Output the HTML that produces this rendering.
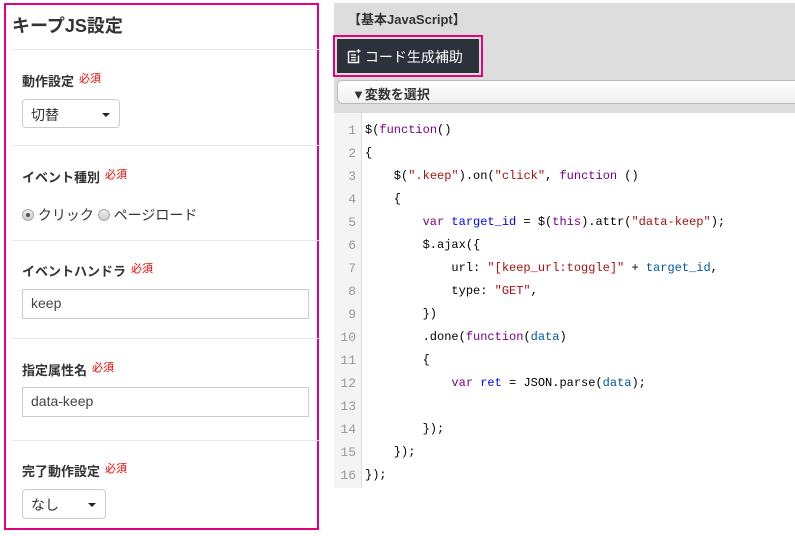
<!DOCTYPE html>
<html><head><meta charset="utf-8"><style>
*{box-sizing:border-box;margin:0;padding:0}
body{width:795px;height:534px;background:#fff;font-family:"Liberation Sans","Noto Sans CJK JP",sans-serif;color:#333;position:relative;overflow:hidden}
.lp{position:absolute;left:4px;top:3px;width:315px;height:527px;border:2px solid #e4007f}
.a{position:absolute}
.title{left:12px;top:12px;font-size:18px;font-weight:bold;color:#333}
.hr{position:absolute;left:8px;width:307px;height:1px;background:#e8e8e8}
.lbl{font-size:13px;font-weight:bold;color:#333}
.req{color:#e00;font-size:11px;font-weight:normal;margin-left:5px;vertical-align:4px}
.sel{border:1px solid #ccc;border-radius:4px;font-size:14px;padding:5px 8px;background:#fff}
.sel:after{content:"";position:absolute;right:9px;top:13px;border-left:4px solid transparent;border-right:4px solid transparent;border-top:4px solid #222}
.inp{border:1px solid #ccc;font-size:14px;padding:5px 8px;background:#fff;color:#444}
.rad{display:inline-block;width:12px;height:12px;border-radius:50%;border:1px solid #aaa;background:linear-gradient(#eee,#ccc);vertical-align:-1px;position:relative}
.rad.on:after{content:"";position:absolute;left:3px;top:3px;width:4px;height:4px;border-radius:50%;background:#555}
.rp{position:absolute;left:334px;top:3px;width:461px;height:110px;background:#ddd}
.code{position:absolute;left:334px;top:113px;width:461px;height:375px;background:#fff}
.gut{position:absolute;left:334px;top:113px;width:28px;height:375px;background:#f4f4f4;border-right:1px solid #ddd}
.ln{position:absolute;left:334px;width:22px;text-align:right;font-family:"Liberation Mono",monospace;font-size:13px;color:#999}
.cl{position:absolute;left:365px;font-family:"Liberation Mono",monospace;font-size:12px;color:#000;white-space:pre}
.k{color:#708}.s{color:#a11}.v{color:#05a}.d{color:#00f}
</style></head><body>
<div class="lp"></div>
<div class="a title">キープJS設定</div>
<div class="hr" style="top:49px;left:12px"></div>
<div class="a lbl" style="left:22px;top:70px">動作設定<span class="req">必須</span></div>
<div class="a sel" style="left:22px;top:99px;width:98px;height:29px">切替</div>
<div class="hr" style="top:145px;left:12px"></div>
<div class="a lbl" style="left:22px;top:166px">イベント種別<span class="req">必須</span></div>
<div class="a" style="left:22px;top:205px;font-size:14px"><span class="rad on"></span> クリック <span class="rad"></span> ページロード</div>
<div class="hr" style="top:240px;left:12px"></div>
<div class="a lbl" style="left:22px;top:260px">イベントハンドラ<span class="req">必須</span></div>
<div class="a inp" style="left:22px;top:289px;width:287px;height:30px">keep</div>
<div class="hr" style="top:338px;left:12px"></div>
<div class="a lbl" style="left:22px;top:359px">指定属性名<span class="req">必須</span></div>
<div class="a inp" style="left:22px;top:387px;width:287px;height:30px">data-keep</div>
<div class="hr" style="top:440px;left:12px"></div>
<div class="a lbl" style="left:22px;top:460px">完了動作設定<span class="req">必須</span></div>
<div class="a sel" style="left:22px;top:489px;width:84px;height:30px">なし</div>

<div class="rp"></div>
<div class="a" style="left:348px;top:9px;font-size:13px;font-weight:bold;color:#333">【基本JavaScript】</div>
<div class="a" style="left:333px;top:35px;width:150px;height:42px;border:2px solid #e4007f"></div>
<div class="a" style="left:337px;top:39px;width:142px;height:34px;background:#2d313c;color:#fff;font-size:14px;padding:8px 0 0 10px">
<svg width="14" height="15" viewBox="0 0 14 15" style="vertical-align:-2px"><path d="M1.5 2.5h7M1.5 2.5v11h10v-7" fill="none" stroke="#fff" stroke-width="1.4"/><path d="M4 6h5M4 8.5h5M4 11h5" stroke="#fff" stroke-width="1.2"/><path d="M11.5 0v4M9.5 2h4" stroke="#fff" stroke-width="1.2"/></svg> コード生成補助</div>
<div class="a" style="left:337px;top:80px;width:470px;height:24px;border:1px solid #bbb;border-radius:5px;background:linear-gradient(#fff,#f0f0f0);font-size:13px;font-weight:bold;color:#333;padding:3px 0 0 14px">▼変数を選択</div>
<div class="code"></div><div class="gut"></div>
<div style="position:absolute;left:0;top:2px;width:795px;height:534px">
<div class="ln" style="top:121px">1</div><div class="cl" style="top:121px">$(<span class="k">function</span>()</div>
<div class="ln" style="top:144px">2</div><div class="cl" style="top:144px">{</div>
<div class="ln" style="top:167px">3</div><div class="cl" style="top:167px">    $(<span class="s">".keep"</span>).on(<span class="s">"click"</span>, <span class="k">function</span> ()</div>
<div class="ln" style="top:190px">4</div><div class="cl" style="top:190px">    {</div>
<div class="ln" style="top:213px">5</div><div class="cl" style="top:213px">        <span class="k">var</span> <span class="d">target_id</span> = $(<span class="k">this</span>).attr(<span class="s">"data-keep"</span>);</div>
<div class="ln" style="top:236px">6</div><div class="cl" style="top:236px">        $.ajax({</div>
<div class="ln" style="top:259px">7</div><div class="cl" style="top:259px">            url: <span class="s">"[keep_url:toggle]"</span> + <span class="v">target_id</span>,</div>
<div class="ln" style="top:282px">8</div><div class="cl" style="top:282px">            type: <span class="s">"GET"</span>,</div>
<div class="ln" style="top:305px">9</div><div class="cl" style="top:305px">        })</div>
<div class="ln" style="top:328px">10</div><div class="cl" style="top:328px">        .done(<span class="k">function</span>(<span class="v">data</span>)</div>
<div class="ln" style="top:351px">11</div><div class="cl" style="top:351px">        {</div>
<div class="ln" style="top:374px">12</div><div class="cl" style="top:374px">            <span class="k">var</span> <span class="d">ret</span> = JSON.parse(<span class="v">data</span>);</div>
<div class="ln" style="top:397px">13</div>
<div class="ln" style="top:420px">14</div><div class="cl" style="top:420px">        });</div>
<div class="ln" style="top:443px">15</div><div class="cl" style="top:443px">    });</div>
<div class="ln" style="top:466px">16</div><div class="cl" style="top:466px">});</div>
</div>
</body></html>
